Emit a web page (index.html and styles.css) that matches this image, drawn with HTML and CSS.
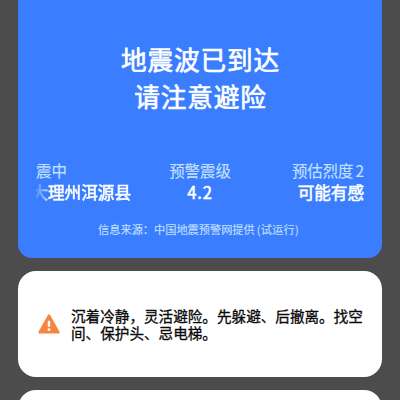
FILE: index.html
```html
<!DOCTYPE html>
<html lang="zh-CN">
<head>
<meta charset="utf-8">
<title>地震预警</title>
<link rel="stylesheet" href="styles.css">
</head>
<body>
<main class="screen">
  <section class="card alert">
    <h1 class="title">地震波已到达<br>请注意避险</h1>
    <div class="stats">
      <div class="stat stat-left">
        <div class="label">震中</div>
        <div class="value marquee"><span>大理州洱源县</span></div>
      </div>
      <div class="stat stat-center">
        <div class="label">预警震级</div>
        <div class="value number">4.2</div>
      </div>
      <div class="stat stat-right">
        <div class="label">预估烈度<span class="level">2</span></div>
        <div class="value">可能有感</div>
      </div>
    </div>
    <p class="source">信息来源：中国地震预警网提供<span class="trial">(试运行)</span></p>
  </section>
  <section class="card tip">
    <svg class="warn" viewBox="0 0 22 20" aria-hidden="true">
      <path d="M9.900 1Q11 -.3 12.100 1L21.500 17.800Q22 19.500 20.500 19.500H1.500Q0 19.500 .5 17.800Z" fill="#f5853f"/>
      <path d="M11 6.800V12.800" stroke="#fff" stroke-width="2.400"/>
      <circle cx="11" cy="15.600" r="1.400" fill="#fff"/>
    </svg>
    <p class="tip-text">沉着冷静，灵活避险。先躲避、后撤离。找空间、保护头、忌电梯。</p>
  </section>
  <section class="card next"></section>
</main>
</body>
</html>
```
FILE: styles.css
```css
* { box-sizing: border-box; margin: 0; padding: 0; }
body {
  background: #4c4c4c;
  font-family: "Noto Sans CJK SC", sans-serif;
  overflow: hidden;
}
.screen {
  height: 400px;
  padding: 0 18px;
  display: flex;
  flex-direction: column;
  gap: 13px;
  overflow: hidden;
}
.card { flex: none; border-radius: 18px; background: #fff; }
.alert {
  height: 257.5px;
  padding: 40px 18px 0;
  border-radius: 0 0 14px 14px;
  background: #3a7eff;
  color: #fff;
}
.title {
  padding-left: .8px;
  font-size: 25.600px;
  letter-spacing: .9px;
  line-height: 37px;
  font-weight: 400;
  text-align: center;
  -webkit-text-stroke: .65px #fff;
}
.stats {
  display: grid;
  grid-template-columns: 95px 1fr 95px;
  margin-top: 45px;
}
.stat-center { text-align: center; }
.stat-right { text-align: right; }
.label {
  font-size: 15.400px;
  line-height: 22px;
  color: #c3e0ff;
  white-space: nowrap;
  -webkit-text-stroke: .15px #c3e0ff;
}
.level { margin-left: 2px; }
.value {
  font-size: 16.600px;
  line-height: 22px;
  font-weight: 400;
  white-space: nowrap;
  -webkit-text-stroke: .55px #fff;
}
.number { letter-spacing: .8px; }
.marquee {
  display: flex;
  justify-content: flex-end;
  overflow: hidden;
  mask-image: linear-gradient(to right, rgba(0,0,0,.15), rgba(0,0,0,.5) 9px, #000 13px);
}
.source {
  margin-top: 18px;
  padding-right: 3px;
  font-size: 11.200px;
  line-height: 16px;
  color: #c3e0ff;
  text-align: center;
  -webkit-text-stroke: .1px #c3e0ff;
}
.trial { margin-left: 2px; letter-spacing: .2px; }
.tip {
  height: 106.500px;
  padding: 36px 10px 0 20px;
  display: flex;
  align-items: flex-start;
  gap: 11px;
}
.warn { width: 22px; height: 20px; margin-top: 7px; flex: none; }
.tip-text {
  width: 300px;
  font-size: 14.600px;
  line-height: 17px;
  color: #080808;
  -webkit-text-stroke: .3px #080808;
}
.next { height: 60px; }
```
